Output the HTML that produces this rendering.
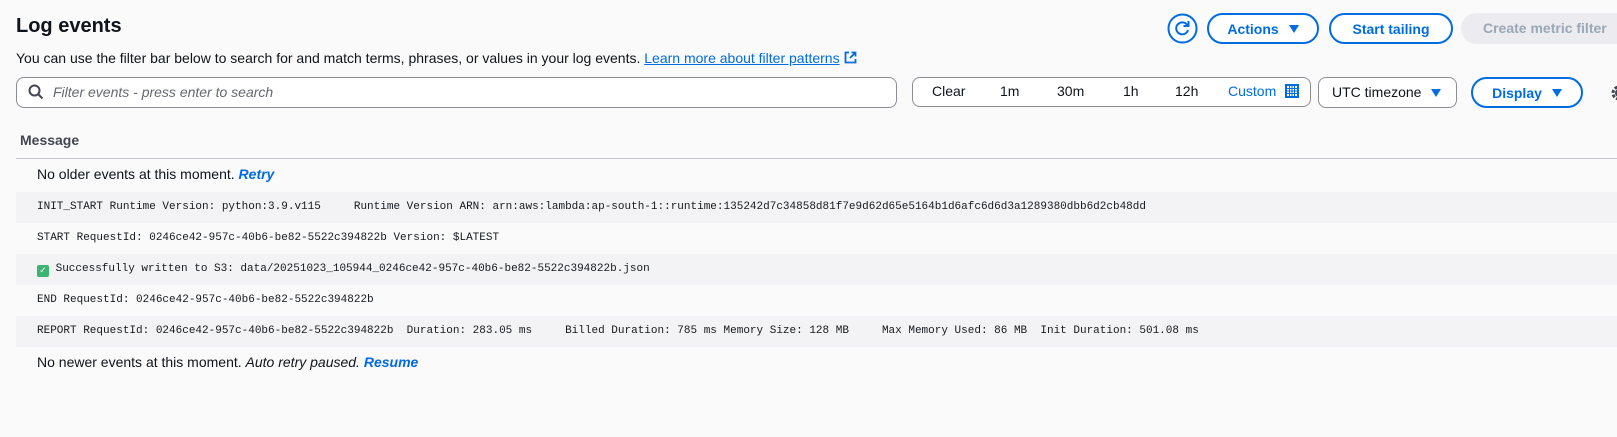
<!DOCTYPE html>
<html><head><meta charset="utf-8"><style>
*{box-sizing:border-box;margin:0;padding:0}
body{width:1617px;height:437px;background:#fafafa;font-family:"Liberation Sans",sans-serif;color:#0f141a;position:relative;overflow:hidden;font-size:14px}
.a{position:absolute;white-space:nowrap}
.btn{position:absolute;border:2px solid #006ce0;border-radius:16px;color:#006ce0;font-weight:bold;font-size:14px;display:flex;align-items:center;justify-content:center;background:#fff}
.tri{display:inline-block;width:0;height:0;border-left:5px solid transparent;border-right:5px solid transparent;border-top:8px solid currentColor;margin-left:10px}
.row{position:absolute;left:16px;right:0;height:31px;font-family:"Liberation Mono",monospace;font-size:11px;line-height:31px;padding-left:21px;white-space:pre;color:#16191f}
.g{background:#f3f3f5}
.blue{color:#006ce0}
</style></head><body>
<div class="a" style="left:16px;top:15px;font-size:20px;font-weight:bold">Log events</div>
<div class="a" style="left:16px;top:50px;font-size:14px">You can use the filter bar below to search for and match terms, phrases, or values in your log events. <span class="blue" style="text-decoration:underline">Learn more about filter patterns</span> <svg width="13" height="13" viewBox="0 0 13 13" style="vertical-align:-1px"><path d="M5 1.5H1.5v10h10V8M7.5 1.5h4v4M11.5 1.5L6 7" fill="none" stroke="#006ce0" stroke-width="1.8"/></svg></div>

<svg class="a" style="left:1167px;top:13px" width="31" height="31" viewBox="0 0 31 31"><circle cx="15.5" cy="15.5" r="14" fill="#fff" stroke="#006ce0" stroke-width="2"/><path d="M20.5 12.5A6 6 0 1 0 21 17" fill="none" stroke="#006ce0" stroke-width="2"/><path d="M21.5 8v5h-5" fill="none" stroke="#006ce0" stroke-width="2"/></svg>
<div class="btn" style="left:1207px;top:13px;width:112px;height:31px">Actions<span class="tri"></span></div>
<div class="btn" style="left:1329px;top:13px;width:124px;height:31px">Start tailing</div>
<div class="a" style="left:1461px;top:13px;width:220px;height:31px;border-radius:16px;background:#ebebf0;color:#9ba7b6;font-weight:bold;line-height:31px;padding-left:22px">Create metric filter</div>

<div class="a" style="left:16px;top:77px;width:881px;height:31px;border:1px solid #8c8c94;border-radius:8px;background:#fff"></div>
<svg class="a" style="left:28px;top:84px" width="16" height="16" viewBox="0 0 16 16"><circle cx="6.5" cy="6.5" r="5" fill="none" stroke="#424650" stroke-width="2"/><path d="M10 10l4.5 4.5" stroke="#424650" stroke-width="2"/></svg>
<div class="a" style="left:53px;top:84px;font-style:italic;color:#656871">Filter events - press enter to search</div>

<div class="a" style="left:912px;top:77px;width:399px;height:30px;border:1px solid #8c8c94;border-radius:8px;background:#fff"></div>
<div class="a" style="left:932px;top:83px">Clear</div>
<div class="a" style="left:1000px;top:83px">1m</div>
<div class="a" style="left:1057px;top:83px">30m</div>
<div class="a" style="left:1123px;top:83px">1h</div>
<div class="a" style="left:1175px;top:83px">12h</div>
<div class="a blue" style="left:1228px;top:83px">Custom</div>
<svg class="a" style="left:1285px;top:84px" width="14" height="14" viewBox="0 0 14 14"><rect x="1" y="1" width="12" height="12" fill="none" stroke="#006ce0" stroke-width="2"/><path d="M4.5 1v12M7 1v12M9.5 1v12M1 4.5h12M1 7h12M1 9.5h12" stroke="#006ce0" stroke-width="1"/></svg>

<div class="a" style="left:1318px;top:77px;width:139px;height:31px;border:1px solid #8c8c94;border-radius:8px;background:#fff;padding-left:13px;line-height:29px">UTC timezone<span class="tri" style="color:#006ce0"></span></div>
<div class="btn" style="left:1471px;top:77px;width:112px;height:31px">Display<span class="tri"></span></div>
<svg class="a" style="left:1609px;top:83px" width="20" height="20" viewBox="0 0 20 20"><circle cx="10" cy="10" r="6" fill="none" stroke="#424650" stroke-width="3" stroke-dasharray="3 1.7"/><circle cx="10" cy="10" r="3" fill="none" stroke="#424650" stroke-width="2"/></svg>

<div class="a" style="left:20px;top:132px;font-weight:bold;color:#424650">Message</div>
<div class="a" style="left:16px;top:158px;right:0;height:1px;background:#c6c6cd"></div>
<div class="a" style="left:37px;top:166px">No older events at this moment. <i class="blue" style="font-weight:bold">Retry</i></div>

<div class="row g" style="top:192px">INIT_START Runtime Version: python:3.9.v115     Runtime Version ARN: arn:aws:lambda:ap-south-1::runtime:135242d7c34858d81f7e9d62d65e5164b1d6afc6d6d3a1289380dbb6d2cb48dd</div>
<div class="row" style="top:223px">START RequestId: 0246ce42-957c-40b6-be82-5522c394822b Version: $LATEST</div>
<div class="row g" style="top:254px"><span style="display:inline-block;width:12px;height:12px;background:#3cb371;border-radius:2px;vertical-align:-2px;color:#fff;font-size:9px;line-height:12px;text-align:center">✓</span> Successfully written to S3: data/20251023_105944_0246ce42-957c-40b6-be82-5522c394822b.json</div>
<div class="row" style="top:285px">END RequestId: 0246ce42-957c-40b6-be82-5522c394822b</div>
<div class="row g" style="top:316px">REPORT RequestId: 0246ce42-957c-40b6-be82-5522c394822b  Duration: 283.05 ms     Billed Duration: 785 ms Memory Size: 128 MB     Max Memory Used: 86 MB  Init Duration: 501.08 ms</div>
<div class="a" style="left:37px;top:354px">No newer events at this moment. <i>Auto retry paused.</i> <i class="blue" style="font-weight:bold">Resume</i></div>
</body></html>
